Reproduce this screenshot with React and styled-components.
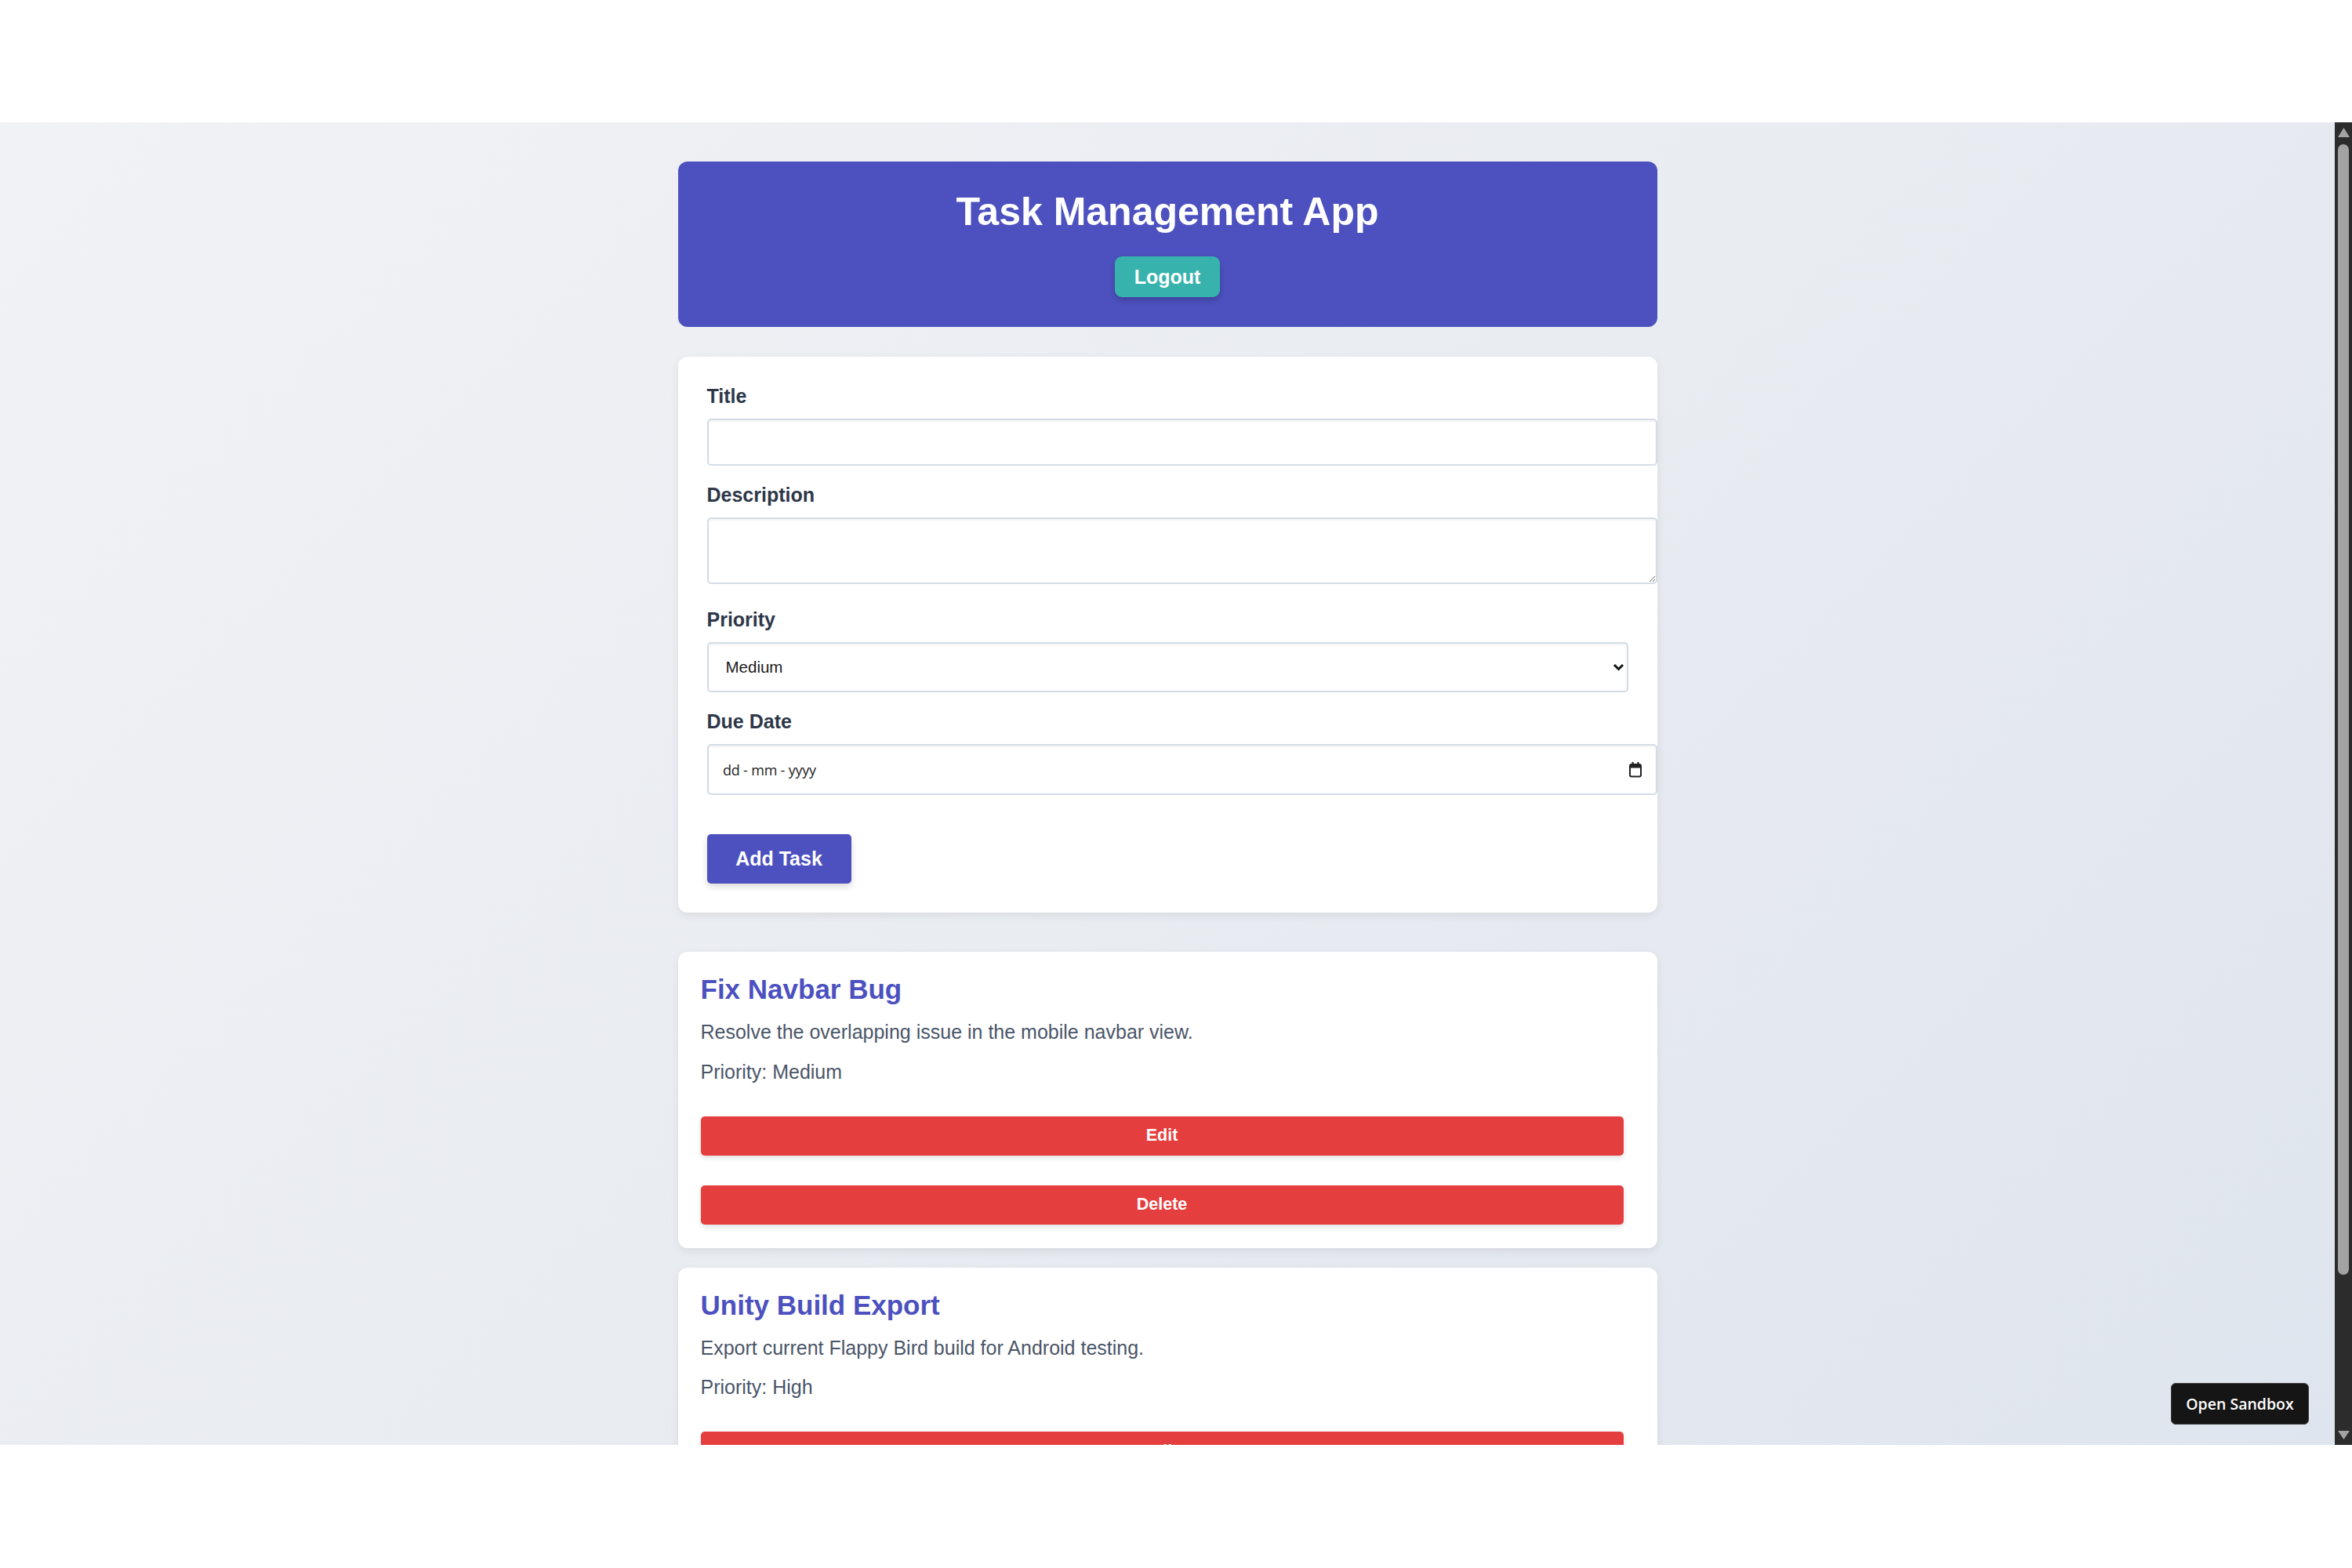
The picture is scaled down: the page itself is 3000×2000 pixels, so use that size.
import React from "react";
import styled, { createGlobalStyle } from "styled-components";

const colors = {
  indigo: "#4c51bf",
  teal: "#38b2ac",
  red: "#e53e3e",
  label: "#2d3748",
  text: "#4a5568",
  border: "#d5dce7",
  white: "#ffffff",
};

const GlobalStyle = createGlobalStyle`
  body {
    margin: 0;
    background: #fff;
    font-family: "Liberation Sans", Arial, sans-serif;
  }
`;

const TopBand = styled.div`
  height: 156px;
  background: #fff;
`;

const Frame = styled.div`
  display: flex;
  height: 1687px;
`;

const Viewport = styled.div`
  flex: 1;
  position: relative;
  overflow: hidden;
  background: linear-gradient(135deg, #f1f2f5 0%, #e9ecf1 50%, #dfe5ee 100%);
`;

const Container = styled.div`
  width: 1249px;
  margin: 50px auto 0;
`;

const Header = styled.header`
  background: ${colors.indigo};
  border-radius: 12px;
  padding: 36px 0 38px;
  text-align: center;
`;

const AppTitle = styled.h1`
  margin: 0;
  color: ${colors.white};
  font-size: 50px;
  line-height: 57px;
  font-weight: 700;
`;

const LogoutButton = styled.button`
  margin-top: 28px;
  width: 134px;
  height: 52px;
  border: none;
  border-radius: 9px;
  background: ${colors.teal};
  color: ${colors.white};
  font-family: inherit;
  font-size: 25px;
  font-weight: 700;
  box-shadow: 0 4px 8px rgba(0, 0, 0, 0.2);
  cursor: pointer;
`;

const Card = styled.div`
  background: ${colors.white};
  border-radius: 12px;
  box-shadow: 0 4px 12px rgba(0, 0, 0, 0.07);
`;

const FormCard = styled(Card)`
  margin-top: 38px;
  padding: 36px 37px 37px;
`;

const Label = styled.label`
  display: block;
  margin-bottom: 15px;
  color: ${colors.label};
  font-size: 25px;
  line-height: 28px;
  font-weight: 700;
`;

const fieldBase = `
  display: block;
  border: 2px solid ${colors.border};
  border-radius: 5px;
  background: #fff;
  box-shadow: inset 0 2px 3px rgba(0, 0, 0, 0.05);
  font-family: "Liberation Sans", Arial, sans-serif;
  outline: none;
`;

const TextInput = styled.input`
  ${fieldBase}
  box-sizing: content-box;
  width: 100%;
  height: 56px;
  padding: 0 16.5px;
  margin: 0 0 23px;
  font-size: 20px;
`;

const TextArea = styled.textarea`
  ${fieldBase}
  box-sizing: content-box;
  width: 100%;
  height: 81px;
  padding: 0 16.5px;
  margin: 0 0 30.5px;
  resize: vertical;
  font-size: 20px;
`;

const SelectWrap = styled.div`
  position: relative;
  margin-bottom: 23.5px;
`;

const Select = styled.select`
  ${fieldBase}
  box-sizing: border-box;
  appearance: none;
  width: 100%;
  height: 64px;
  padding: 0 22px;
  color: #1a1a1a;
  font-size: 20.5px;
`;

const Chevron = styled.svg`
  position: absolute;
  right: 5px;
  top: 27px;
  pointer-events: none;
`;

const DateField = styled.div`
  ${fieldBase}
  box-sizing: content-box;
  width: 100%;
  height: 61px;
  padding: 0 16.5px;
  display: flex;
  align-items: center;
  justify-content: space-between;
`;

const DateText = styled.span`
  padding-left: 2px;
  color: #222;
  font-family: "Open Sans", "Noto Sans", sans-serif;
  font-size: 18px;
  letter-spacing: -0.2px;
`;

const AddButton = styled.button`
  margin-top: 50px;
  width: 184px;
  height: 63px;
  border: none;
  border-radius: 5px;
  background: ${colors.indigo};
  color: ${colors.white};
  font-family: inherit;
  font-size: 25px;
  font-weight: 700;
  box-shadow: 0 4px 9px rgba(0, 0, 0, 0.15);
  cursor: pointer;
`;

const TaskList = styled.div`
  margin-top: 50px;
  display: flex;
  flex-direction: column;
  gap: 25px;
`;

const TaskCard = styled(Card)`
  padding: 28px 29px 30px;
`;

const TaskTitle = styled.h3`
  margin: 0 0 20px;
  color: ${colors.indigo};
  font-size: 35px;
  line-height: 40px;
  font-weight: 700;
`;

const TaskText = styled.p`
  margin: 0 0 ${(p) => p.$gap}px;
  color: ${colors.text};
  font-size: 25px;
  line-height: 28px;
`;

const DangerButton = styled.button`
  display: block;
  width: calc(100% - 14px);
  height: 50px;
  margin-bottom: ${(p) => p.$gap || 0}px;
  border: none;
  border-radius: 5px;
  background: ${colors.red};
  color: ${colors.white};
  font-family: inherit;
  font-size: 21.5px;
  font-weight: 700;
  box-shadow: 0 3px 6px rgba(0, 0, 0, 0.12);
  cursor: pointer;
`;

const SandboxButton = styled.button`
  position: absolute;
  right: 33px;
  bottom: 26px;
  width: 176px;
  height: 53px;
  border: 1px solid #3a3a3a;
  border-radius: 6px;
  background: #151515;
  color: #fff;
  font-family: "Open Sans", "Noto Sans", sans-serif;
  font-size: 19.5px;
  font-weight: 600;
`;

const Scrollbar = styled.div`
  width: 22px;
  background: #2c2c2c;
  display: flex;
  flex-direction: column;
  align-items: center;
`;

const ArrowBox = styled.div`
  height: ${(p) => p.$h}px;
  display: flex;
  align-items: ${(p) => (p.$down ? "flex-start" : "flex-end")};
  justify-content: center;
`;

const Thumb = styled.div`
  width: 14px;
  height: 1442px;
  margin-top: 9px;
  border-radius: 7px;
  background: #a3a3a3;
`;

const Track = styled.div`
  flex: 1;
`;

const tasks = [
  {
    title: "Fix Navbar Bug",
    description: "Resolve the overlapping issue in the mobile navbar view.",
    priority: "Medium",
  },
  {
    title: "Unity Build Export",
    description: "Export current Flappy Bird build for Android testing.",
    priority: "High",
  },
];

const CalendarIcon = () => (
  <svg width="18" height="21" viewBox="0 0 18 21">
    <rect x="2" y="4" width="14" height="15.5" rx="2" fill="none" stroke="#222" strokeWidth="2" />
    <rect x="2" y="4" width="14" height="4.5" fill="#222" />
    <rect x="4.5" y="1" width="2.2" height="4" fill="#222" />
    <rect x="11.3" y="1" width="2.2" height="4" fill="#222" />
  </svg>
);

export default function App() {
  return (
    <>
      <GlobalStyle />
      <TopBand />
      <Frame>
        <Viewport>
          <Container>
            <Header>
              <AppTitle>Task Management App</AppTitle>
              <LogoutButton>Logout</LogoutButton>
            </Header>

            <FormCard>
              <Label>Title</Label>
              <TextInput type="text" />

              <Label>Description</Label>
              <TextArea />

              <Label>Priority</Label>
              <SelectWrap>
                <Select defaultValue="Medium">
                  <option>Low</option>
                  <option>Medium</option>
                  <option>High</option>
                </Select>
                <Chevron width="15" height="10" viewBox="0 0 15 10">
                  <polyline points="2,2 7.5,7.5 13,2" fill="none" stroke="#111" strokeWidth="3" />
                </Chevron>
              </SelectWrap>

              <Label>Due Date</Label>
              <DateField>
                <DateText>dd - mm - yyyy</DateText>
                <CalendarIcon />
              </DateField>

              <AddButton>Add Task</AddButton>
            </FormCard>

            <TaskList>
              {tasks.map((task) => (
                <TaskCard key={task.title}>
                  <TaskTitle>{task.title}</TaskTitle>
                  <TaskText $gap={22.5}>{task.description}</TaskText>
                  <TaskText $gap={43}>Priority: {task.priority}</TaskText>
                  <DangerButton $gap={38}>Edit</DangerButton>
                  <DangerButton>Delete</DangerButton>
                </TaskCard>
              ))}
            </TaskList>
          </Container>
          <SandboxButton>Open Sandbox</SandboxButton>
        </Viewport>

        <Scrollbar>
          <ArrowBox $h={19}>
            <svg width="15" height="12" viewBox="0 0 15 12">
              <polygon points="7.5,0 15,12 0,12" fill="#a3a3a3" />
            </svg>
          </ArrowBox>
          <Thumb />
          <Track />
          <ArrowBox $h={18} $down>
            <svg width="15" height="11" viewBox="0 0 15 11">
              <polygon points="0,0 15,0 7.5,11" fill="#a3a3a3" />
            </svg>
          </ArrowBox>
        </Scrollbar>
      </Frame>
    </>
  );
}
